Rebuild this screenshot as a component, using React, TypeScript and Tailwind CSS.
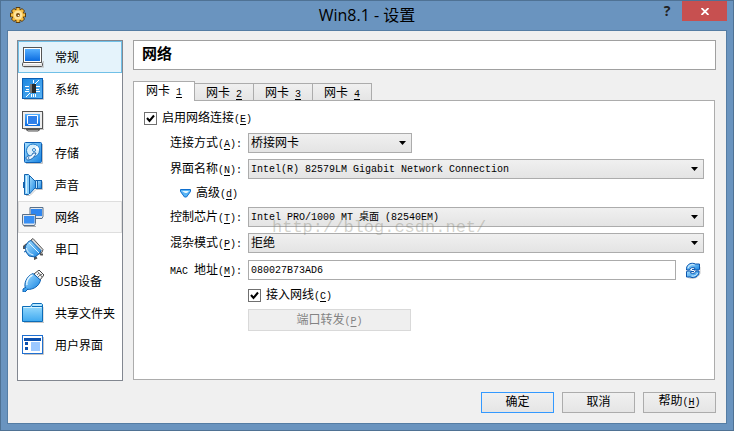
import React, { useId, useState } from 'react';
import clsx from 'clsx';

const GeneralIcon = () => (
  <svg viewBox="0 0 22 22" className="size-[22px]">
    <path d="M2 21h20v-4l-1-2" fill="none" stroke="#bbb" />
    <rect x="1.5" y="1.5" width="18" height="15" fill="#fff" stroke="#555" />
    <rect x="3" y="3" width="15" height="12" fill="url(#screen)" />
    <rect x=".5" y="16.500" width="20" height="4" rx="1" fill="#e4e4e4" stroke="#555" />
    <path d="M2 17.500h17" stroke="#fff" />
  </svg>
);

const SystemIcon = () => (
  <svg viewBox="0 0 22 22" className="size-[22px]">
    <path d="M2 21.500h19.500V2" fill="none" stroke="#c4c4c4" />
    <rect x=".5" y=".5" width="20" height="20" fill="url(#chipboard)" stroke="#0b5fb4" />
    <path
      d="M3 8.500h4M4 11.500h3M3 13.500h4M14 8.500h4M14 11.500h3M14 13.500h4M11.500 2v3M11.500 16v3M13.500 16v3M9.500 16v3M13 6l4-4M8 15l-4 4"
      stroke="#fff"
      fill="none"
    />
    <rect x="8" y="6" width="6" height="9" fill="#2a2a2a" />
    <path d="M8 6h2v9H8z" fill="#777" />
  </svg>
);

const DisplayIcon = () => (
  <svg viewBox="0 0 22 22" className="size-[22px]">
    <path d="M2 19.500h20v-17" fill="none" stroke="#c4c4c4" />
    <rect x=".5" y="1.500" width="20" height="17" fill="#eee" stroke="#555" />
    <rect x="3" y="4" width="15" height="12" fill="url(#screen)" />
    <path d="M5.500 5.500h10v8l-1 1h-8l-1-1z" fill="#2f80ea" stroke="#fff" />
    <path d="M4 19.500h14l-2 1.500H6z" fill="#ddd" stroke="#555" />
  </svg>
);

const StorageIcon = () => (
  <svg viewBox="0 0 22 22" className="size-[22px]">
    <path d="M4 21.500h16.500V2" fill="none" stroke="#c4c4c4" />
    <rect x="2.500" y=".5" width="17" height="20" rx="1" fill="url(#board)" stroke="#0b5fb4" />
    <circle cx="11" cy="8.500" r="6.500" fill="#d8effc" stroke="#1a78c8" />
    <path d="M11 8.500 15 3.500A6 6 0 0 1 17 8z" fill="#fff" />
    <circle cx="12" cy="8" r="1.500" fill="#fff" stroke="#277fc8" />
    <path d="M14 11c-1 4-5 7-8 7-2 0-3-3 0-4 2 0 4 0 5-3z" fill="#eef8ff" stroke="#1761ac" />
    <circle cx="6.500" cy="16" r=".8" fill="#1761ac" />
  </svg>
);

const AudioIcon = () => (
  <svg viewBox="0 0 22 22" className="size-[22px]">
    <path d="M4 21.500h4l6-6h6.500v-8" fill="none" stroke="#c4c4c4" />
    <path d="M1 8h2v6H1z" fill="#1463ae" />
    <path d="M7.500 1.500 13.500 7.500v6l-6 6.500z" fill="url(#board)" stroke="#1463ae" />
    <path d="M2.500.5h4l1 1v18l-1 1h-4z" fill="#8ad0fb" stroke="#1463ae" />
    <path d="M4.500 2v17" stroke="#dcf3ff" />
    <path d="M13.500 6.500h2v8h-2z" fill="#bde4fd" stroke="#1463ae" />
    <rect x="15.500" y="6.500" width="4" height="8" fill="url(#board)" stroke="#1463ae" />
  </svg>
);

const NetworkIcon = () => (
  <svg viewBox="0 0 22 22" className="size-[22px]">
    <path d="M8 1.500h13v9l-1 2H9l-1-2z" fill="#e4e8ec" stroke="#58708a" />
    <path d="M9 3h11v7H9z" fill="#2f86ef" />
    <path d="M.5 8.500h13v9l-1 2h-11l-1-2z" fill="#e4e8ec" stroke="#58708a" />
    <path d="M2 10h10.500v7.500H2z" fill="#388ff3" />
    <path d="M2 20.500h12" stroke="#aaa" />
  </svg>
);

const SerialIcon = () => (
  <svg viewBox="0 0 22 22" className="size-[22px]">
    <path d="m9 2 2-1.500 10 11-1 3-3-1z" fill="#d9d9d9" stroke="#555" />
    <path d="M2 11V8.500L5 6M13 18v2.500l2-1M17 14l2 2.500h2" stroke="#555" strokeWidth="2" fill="none" />
    <path d="M6.500 3.500 9 2.500l10 10-1.500 3-4.500 3.500-6-1-3-4-.5-6z" fill="url(#board)" stroke="#0f5daa" />
    <path d="m7 5 10 10M4.500 10c0 3 3 6 7 7" stroke="#e3f5ff" fill="none" />
    <path d="m2 10 1.500-1M2 14l2-1" stroke="#0f5daa" fill="none" />
  </svg>
);

const UsbIcon = () => (
  <svg viewBox="0 0 22 22" className="size-[22px]">
    <path d="m12 4 5-4 5 5-4 5z" fill="#f5f5f5" stroke="#444" />
    <path d="m16 2 4 5M15 5l2-2M18 6l2-2M16 7l3-3" stroke="#777" fill="none" />
    <path d="M11 3.500 18.500 10c-1 5-5 8-9 9-3 1-5 0-6-1-2-4 1-12 7.500-14.500z" fill="url(#board)" stroke="#0f62b3" />
    <path d="M10.500 5C6 7 4 12 5 15" stroke="#e8f7ff" strokeWidth="1.500" fill="none" />
    <path d="m4 17-3 2v3h2l3-3" fill="#3ba0ee" stroke="#0f62b3" />
  </svg>
);

const FolderIcon = () => (
  <svg viewBox="0 0 22 22" className="size-[22px]">
    <path d="M2 20.500h20V5" fill="none" stroke="#c4c4c4" />
    <path d="M.5 4.500h8l2-3h9l1 1v17H.5z" fill="url(#folder)" stroke="#0b6cb8" />
    <path d="M10 4.500h10" stroke="#0b6cb8" />
    <path d="M11 3h8M1.500 5.500h18" stroke="#d5f2ff" />
  </svg>
);

const InterfaceIcon = () => (
  <svg viewBox="0 0 22 22" className="size-[22px]">
    <path d="M2 20.500h19.500V3" fill="none" stroke="#c4c4c4" />
    <rect x=".5" y="1.500" width="20" height="18" fill="#fff" stroke="#1f6fd0" />
    <path d="M2 4h17v3H2z" fill="#0a4fae" />
    <path d="M3 8h3v3H3zM3 13h3v3H3z" fill="#0a4fae" />
    <path d="M9 8h9v9H9z" fill="#9cc8ff" />
  </svg>
);

const GearIcon = () => (
  <svg viewBox="0 0 17 17" className="size-[17px]">
    <g stroke="#5d3c0a" strokeWidth="4.500">
      <path d="M8 0v16M0 8h16M2.500 2.500l11 11M13.500 2.500l-11 11" />
    </g>
    <circle cx="8" cy="8" r="6" fill="#f2b83a" stroke="#5d3c0a" />
    <g stroke="#f5bd45" strokeWidth="3">
      <path d="M8 1v14M1 8h14M3 3l10 10M13 3 3 13" />
    </g>
    <circle cx="8" cy="8" r="4.500" fill="#ffe39a" />
    <circle cx="8" cy="8" r="2" fill="#7a4a0c" />
    <circle cx="8.500" cy="8.500" r=".8" fill="#fff" />
  </svg>
);

const RefreshIcon = () => (
  <svg viewBox="0 0 16 17" className="h-[17px] w-4">
    <path d="M3 15.500c4 2 10 1 12-4V5" fill="none" stroke="#ccc" />
    <path d="M1.500 8C1 3 5 .500 9 1.500l1.500.5h4v5.500l-1.500.500h-4l1-2c-3-1-5 0-5.500 2z" fill="url(#board)" stroke="#0c56ae" />
    <path d="M14 9c.500 5-3.500 7-7 6.500L5 15H1.500V9.500L3 9h3.500L5.500 11c3 1 5 0 5.500-2z" fill="url(#board)" stroke="#0c56ae" />
    <path d="M3 6c1-3 4-4 6.500-3M12.500 11c-1 2.500-3.500 3.500-6 3" stroke="#e6f6ff" fill="none" />
    <path d="M7 7.500h3M6 9.500h3" stroke="#0c56ae" />
  </svg>
);

const Gradients = () => (
  <svg className="absolute size-0" aria-hidden="true">
    <defs>
      <linearGradient id="screen" x1="0" y1="0" x2="0" y2="1">
        <stop offset="0" stopColor="#56b0ff" />
        <stop offset="1" stopColor="#0a6be0" />
      </linearGradient>
      <linearGradient id="board" x1="0" y1="0" x2="1" y2="1">
        <stop offset="0" stopColor="#a8e0ff" />
        <stop offset="1" stopColor="#1583e2" />
      </linearGradient>
      <linearGradient id="chipboard" x1="0" y1="0" x2="1" y2="1">
        <stop offset="0" stopColor="#1b86e0" />
        <stop offset="1" stopColor="#5bb4f5" />
      </linearGradient>
      <linearGradient id="folder" x1="0" y1="0" x2="0" y2="1">
        <stop offset="0" stopColor="#a5e2ff" />
        <stop offset="1" stopColor="#3fa9f0" />
      </linearGradient>
    </defs>
  </svg>
);

const pages = [
  { label: '常规', Icon: GeneralIcon },
  { label: '系统', Icon: SystemIcon },
  { label: '显示', Icon: DisplayIcon },
  { label: '存储', Icon: StorageIcon },
  { label: '声音', Icon: AudioIcon },
  { label: '网络', Icon: NetworkIcon },
  { label: '串口', Icon: SerialIcon },
  { label: 'USB设备', Icon: UsbIcon },
  { label: '共享文件夹', Icon: FolderIcon },
  { label: '用户界面', Icon: InterfaceIcon },
];

// Latin text is set smaller so that it takes half the width of a CJK character
const Latin = ({ children }: { children: React.ReactNode }) => (
  <span className="font-['Liberation_Mono',monospace] text-[10px]">{children}</span>
);

const Key = ({ k, colon }: { k: string; colon?: boolean }) => (
  <Latin>
    (<u className="underline-offset-2">{k}</u>){colon && ':'}
  </Latin>
);

interface SelectRowProps {
  label: string;
  k: string;
  options: string[];
  latin?: boolean;
  narrow?: boolean;
}

const SelectRow = ({ label, k, options, latin, narrow }: SelectRowProps) => {
  const id = useId();
  return (
    <>
      <label htmlFor={id} className="pt-0.5 text-right whitespace-nowrap">
        {label}
        <Key k={k} colon />
      </label>
      <div className={clsx('relative', narrow && 'w-[164px]')}>
        <select
          id={id}
          className={clsx(
            'block h-5 w-full appearance-none border border-[#acacac] bg-linear-to-b from-[#f0f0f0] to-[#e4e4e4] pt-0.5 pr-5 pl-[2px] leading-4 outline-none',
            latin ? 'text-[10px]' : 'text-xs'
          )}
        >
          {options.map((o) => (
            <option key={o}>{o}</option>
          ))}
        </select>
        <svg viewBox="0 0 7 4" className="pointer-events-none absolute top-2 right-1.5 h-1 w-[7px]">
          <path d="M0 0h7L3.500 4z" />
        </svg>
      </div>
    </>
  );
};

const Check = ({ label, k }: { label: string; k: string }) => {
  const [on, setOn] = useState(true);
  return (
    <label className="flex items-center gap-[5px] whitespace-nowrap">
      <span className="relative block size-[13px]">
        <input
          type="checkbox"
          checked={on}
          onChange={(e) => setOn(e.target.checked)}
          className="block size-[13px] appearance-none border border-[#707070] bg-white"
        />
        {on && (
          <svg viewBox="0 0 13 13" className="pointer-events-none absolute inset-0">
            <path d="m3 6 2.500 3L10 3.500" fill="none" stroke="#000" strokeWidth="2" />
          </svg>
        )}
      </span>
      <span className="pt-0.5">
        {label}
        <Key k={k} />
      </span>
    </label>
  );
};

const DialogButton = ({ primary, children }: { primary?: boolean; children: React.ReactNode }) => (
  <button
    className={
      primary
        ? 'h-[21px] w-[73px] border border-[#3399ff] bg-linear-to-b from-[#f0f0f0] to-[#e5e5e5] leading-4'
        : 'h-[21px] w-[73px] border border-[#acacac] bg-linear-to-b from-[#f0f0f0] to-[#e5e5e5] leading-4'
    }
  >
    {children}
  </button>
);

export default function App() {
  const [tab, setTab] = useState(1);

  return (
    <div className="flex min-h-screen flex-col border border-[#4f7294] bg-[#6a94bf] px-1.5 pb-1.5 font-['Liberation_Mono','Noto_Sans_CJK_SC',monospace] text-xs leading-4 text-black">
      <Gradients />
      <header className="grid h-[29px] grid-cols-[1fr_auto_1fr] items-center">
        <div className="pl-[3px]">
          <GearIcon />
        </div>
        <h1 className="pb-0.5 font-['Open_Sans','Noto_Sans_CJK_SC',sans-serif] text-base leading-5">Win8.1 - 设置</h1>
        <div className="flex items-start justify-end gap-[9px] self-start">
          <button aria-label="帮助" className="h-5 w-3 font-['Open_Sans',sans-serif] text-sm leading-5 font-bold text-[#222]">
            ?
          </button>
          <button aria-label="关闭" className="flex h-5 w-[45px] items-center justify-center bg-[#c75050]">
            <svg viewBox="0 0 8 7" className="h-[7px] w-2">
              <path d="m.5 0 7 7M7.500 0l-7 7" stroke="#fff" strokeWidth="1.800" />
            </svg>
          </button>
        </div>
      </header>

      <main className="flex flex-1 flex-col gap-[11px] border border-[#557da4] bg-[#f0f0f0] pt-[9px] pr-2.5 pb-2.5 pl-[9px]">
        <div className="flex flex-1 gap-2.5">
          <nav className="w-[106px] shrink-0 border border-[#828790] bg-white font-['Open_Sans','Noto_Sans_CJK_SC',sans-serif]">
            {pages.map(({ label, Icon }) => (
              <button
                key={label}
                className={clsx(
                  'flex h-8 w-full items-center gap-[11px] border pl-[3px] whitespace-nowrap',
                  label === '常规' && 'border-[#70c0e7] bg-[#e5f3fb]',
                  label === '网络' && 'border-[#dedede] bg-[#f7f7f7]',
                  label !== '常规' && label !== '网络' && 'border-transparent'
                )}
              >
                <Icon />
                <span className="pt-0.5">{label}</span>
              </button>
            ))}
          </nav>

          <section className="flex min-w-0 flex-1 flex-col">
            <h2 className="flex h-[30px] items-center border border-[#a0a0a0] bg-white pt-0.5 pl-2 text-[15px] font-bold">
              网络
            </h2>

            <div className="mt-[11px] flex h-5 items-end">
              {[1, 2, 3, 4].map((n) => (
                <button
                  key={n}
                  onClick={() => setTab(n)}
                  className={clsx(
                    'border-[#acacac] pt-0.5 leading-4 whitespace-nowrap',
                    tab === n
                      ? 'relative z-10 h-5 w-[62px] border-x border-t bg-white'
                      : 'h-[18px] w-[59px] border-y border-r bg-linear-to-b from-[#f0f0f0] to-[#e5e5e5]'
                  )}
                >
                  网卡
                  <Latin>
                    {' '}
                    <u className="underline-offset-2">{n}</u>
                  </Latin>
                </button>
              ))}
            </div>

            <div className="relative -mt-px mr-px mb-px flex-1 border border-[#acacac] bg-white px-2.5 pt-[9px]">
              <div className="grid grid-cols-[98px_1fr] items-center gap-1.5">
                <div className="col-span-2 flex h-[17px] items-center">
                  <Check label="启用网络连接" k="E" />
                </div>

                <SelectRow label="连接方式" k="A" options={['桥接网卡']} narrow />
                <SelectRow label="界面名称" k="N" options={['Intel(R) 82579LM Gigabit Network Connection']} latin />

                <button className="flex h-4 items-center justify-end gap-[5px] pr-1 whitespace-nowrap">
                  <svg viewBox="0 0 11 9" className="h-[9px] w-[11px]">
                    <path d="M.5.5h10v2l-4 5.500h-2l-4-5.500z" fill="#58b4f5" stroke="#0f6fce" />
                    <path d="M2 2h7L7 4H5z" fill="#e6f6ff" />
                  </svg>
                  <span className="pt-0.5">
                    高级
                    <Key k="d" />
                  </span>
                </button>
                <span />

                <SelectRow label="控制芯片" k="T" options={['Intel PRO/1000 MT 桌面 (82540EM)']} latin />
                <SelectRow label="混杂模式" k="P" options={['拒绝']} />

                <label htmlFor="mac" className="pt-0.5 text-right whitespace-nowrap">
                  <Latin>MAC </Latin>地址
                  <Key k="M" colon />
                </label>
                <div className="flex h-[22px] items-center gap-1.5">
                  <input
                    id="mac"
                    defaultValue="080027B73AD6"
                    className="h-5 min-w-0 flex-1 border border-[#ababab] bg-white px-[2px] text-[10px] outline-none"
                  />
                  <button aria-label="刷新" className="flex h-5 w-[22px] items-center justify-center">
                    <RefreshIcon />
                  </button>
                </div>

                <div className="col-start-2 flex h-4 items-center">
                  <Check label="接入网线" k="C" />
                </div>
                <button
                  disabled
                  className="col-start-2 h-[22px] w-[163px] border border-[#d9d9d9] bg-[#efefef] pt-0.5 text-[#838383]"
                >
                  端口转发
                  <Key k="P" />
                </button>
              </div>
              <span className="pointer-events-none absolute top-[115px] left-[138px] text-[17px] leading-6 text-[#808070]/35">
                http://blog.csdn.net/
              </span>
            </div>
          </section>
        </div>

        <footer className="flex justify-end gap-2">
          <DialogButton primary>确定</DialogButton>
          <DialogButton>取消</DialogButton>
          <DialogButton>
            帮助
            <Key k="H" />
          </DialogButton>
        </footer>
      </main>
    </div>
  );
}
